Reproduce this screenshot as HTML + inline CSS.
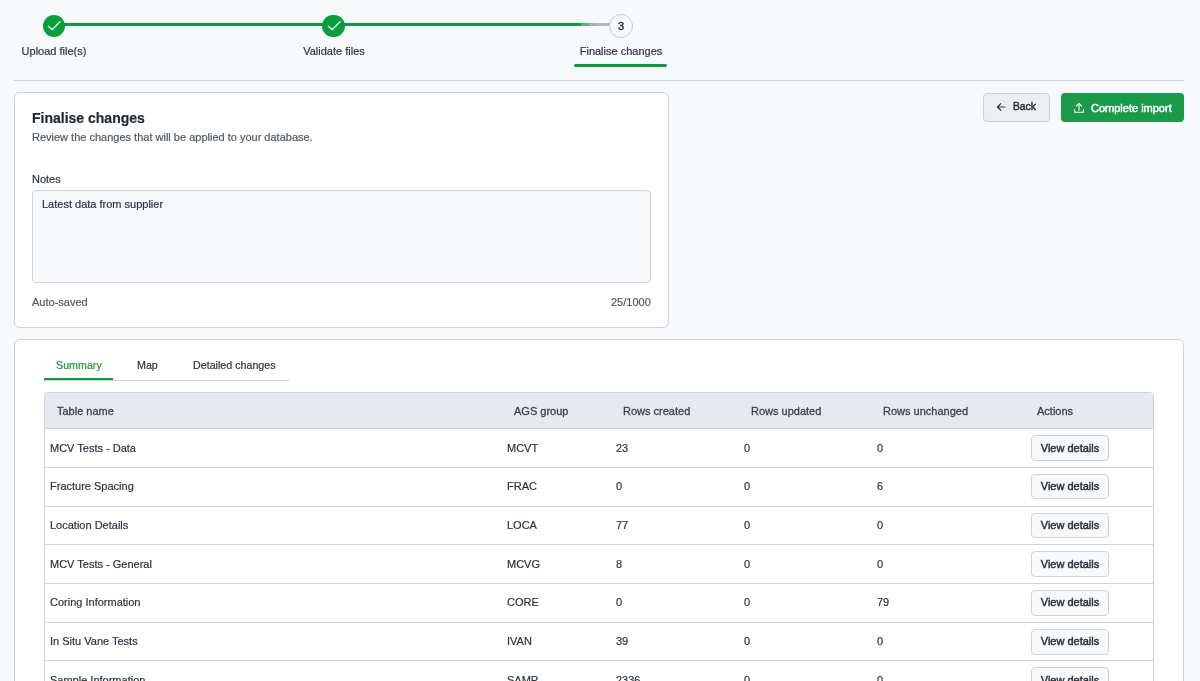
<!DOCTYPE html>
<html><head><meta charset="utf-8"><title>Finalise changes</title>
<style>
html,body{margin:0;padding:0;}
body{width:1200px;height:681px;overflow:hidden;position:relative;background:#f8f9fb;font-family:"Liberation Sans",sans-serif;}
.t{position:absolute;white-space:nowrap;-webkit-font-smoothing:antialiased;will-change:transform;-webkit-text-stroke:0.2px currentColor;}
.abs{position:absolute;box-sizing:border-box;}
</style></head><body>
<div class="abs" style="left:54px;top:22.9px;width:279px;height:3px;background:#06a03a;"></div>
<div class="abs" style="left:333px;top:22.9px;width:288px;height:3px;background:linear-gradient(to right,#06a03a 0,#06a03a 248px,#4cbf6e 248px,#4cbf6e 256px,#a4b3ac 256px,#a4b3ac 262px,#b3babf 262px,#b3babf 100%);"></div>
<div class="abs" style="left:42.75px;top:14.75px;width:22.5px;height:22.5px;border-radius:50%;background:#06a03a;"></div>
<svg class="abs" style="left:43.00px;top:15px;" width="22" height="22" viewBox="0 0 22 22"><path d="M5.4 11.3 L9.1 14.8 L17.1 6.6" fill="none" stroke="#fff" stroke-width="1.25" stroke-linecap="round" stroke-linejoin="round"/></svg>
<div class="abs" style="left:322.25px;top:14.75px;width:22.5px;height:22.5px;border-radius:50%;background:#06a03a;"></div>
<svg class="abs" style="left:322.50px;top:15px;" width="22" height="22" viewBox="0 0 22 22"><path d="M5.4 11.3 L9.1 14.8 L17.1 6.6" fill="none" stroke="#fff" stroke-width="1.25" stroke-linecap="round" stroke-linejoin="round"/></svg>
<div class="abs" style="left:609.2px;top:14px;width:24px;height:24px;border-radius:50%;background:#f8f9fb;border:1.2px solid #c5ccd6;"></div>
<div class="t" style="left:621.30px;width:200px;margin-left:-100px;text-align:center;top:18.89px;font-size:11px;line-height:14px;color:#2c3440;font-weight:normal;-webkit-text-stroke:0.45px currentColor;">3</div>
<div class="t" style="left:53.60px;width:200px;margin-left:-100px;text-align:center;top:43.89px;font-size:11px;line-height:14px;color:#2c3440;font-weight:normal;">Upload file(s)</div>
<div class="t" style="left:333.50px;width:200px;margin-left:-100px;text-align:center;top:43.89px;font-size:11px;line-height:14px;color:#2c3440;font-weight:normal;">Validate files</div>
<div class="t" style="left:621.00px;width:200px;margin-left:-100px;text-align:center;top:43.89px;font-size:11px;line-height:14px;color:#2c3440;font-weight:normal;">Finalise changes</div>
<div class="abs" style="left:574px;top:64px;width:93px;height:3px;border-radius:2px;background:#06a03a;"></div>
<div class="abs" style="left:14px;top:80px;width:1170px;height:1px;background:#cfd4dc;"></div>
<div class="abs" style="left:14px;top:92px;width:655px;height:236px;background:#fff;border:1px solid #cdd3dc;border-radius:6px;"></div>
<div class="t" style="left:31.70px;top:109.25px;font-size:14px;line-height:18px;color:#222a35;font-weight:bold;">Finalise changes</div>
<div class="t" style="left:32.00px;top:130.09px;font-size:11px;line-height:14px;color:#4f5865;font-weight:normal;">Review the changes that will be applied to your database.</div>
<div class="t" style="left:32.30px;top:171.89px;font-size:11px;line-height:14px;color:#2c3440;font-weight:normal;">Notes</div>
<div class="abs" style="left:32px;top:190px;width:618.5px;height:93px;background:#f8f9fb;border:1px solid #cdd3dc;border-radius:4px;"></div>
<div class="t" style="left:41.90px;top:196.89px;font-size:11px;line-height:14px;color:#2c3440;font-weight:normal;">Latest data from supplier</div>
<div class="t" style="left:32.30px;top:295.19px;font-size:11px;line-height:14px;color:#4f5865;font-weight:normal;">Auto-saved</div>
<div class="t" style="right:548.80px;top:294.99px;font-size:11px;line-height:14px;color:#4f5865;font-weight:normal;">25/1000</div>
<div class="abs" style="left:983px;top:92.5px;width:67px;height:29.5px;background:#eceef2;border:1px solid #cdd2da;border-radius:4px;"></div>
<svg class="abs" style="left:995px;top:101.3px;" width="12" height="12" viewBox="0 0 12 12"><path d="M9.9 6 H2.6 M5.8 2.7 L2.5 6 L5.8 9.3" fill="none" stroke="#2c3440" stroke-width="1.15" stroke-linecap="round" stroke-linejoin="round"/></svg>
<div class="t" style="left:1013.30px;top:100.33px;font-size:10.3px;line-height:14px;color:#2a323d;font-weight:normal;-webkit-text-stroke:0.45px currentColor;">Back</div>
<div class="abs" style="left:1061px;top:93px;width:123px;height:29px;background:#199b4a;border-radius:4px;"></div>
<svg class="abs" style="left:1072px;top:101px;" width="14" height="14" viewBox="0 0 14 14"><path d="M7 9 V2.6 M4.3 5.1 L7 2.4 L9.7 5.1 M2.6 8.6 V11.2 H11.4 V8.6" fill="none" stroke="#fff" stroke-width="1.1" stroke-linecap="round" stroke-linejoin="round"/></svg>
<div class="t" style="left:1090.50px;top:100.59px;font-size:11px;line-height:14px;color:#fff;font-weight:normal;-webkit-text-stroke:0.45px currentColor;">Complete import</div>
<div class="abs" style="left:14px;top:339px;width:1170px;height:400px;background:#fff;border:1px solid #cdd3dc;border-radius:6px;"></div>
<div class="abs" style="left:44px;top:380px;width:244.5px;height:1px;background:#cfd4dc;"></div>
<div class="abs" style="left:44px;top:378.4px;width:69px;height:1.8px;background:#06a03a;"></div>
<div class="t" style="left:55.50px;top:358.29px;font-size:10.7px;line-height:14px;color:#169a42;font-weight:normal;">Summary</div>
<div class="t" style="left:136.60px;top:358.29px;font-size:10.7px;line-height:14px;color:#2c3440;font-weight:normal;">Map</div>
<div class="t" style="left:193.00px;top:358.29px;font-size:10.7px;line-height:14px;color:#2c3440;font-weight:normal;">Detailed changes</div>
<div class="abs" style="left:44px;top:392px;width:1109.5px;height:400px;background:#fff;border:1px solid #cdd3dc;border-radius:4px 4px 0 0;"></div>
<div class="abs" style="left:45px;top:393px;width:1107.5px;height:35px;background:#e6e9ee;border-radius:3px 3px 0 0;"></div>
<div class="abs" style="left:45px;top:428px;width:1107.5px;height:1px;background:#cdd3dc;"></div>
<div class="t" style="left:56.90px;top:403.59px;font-size:11px;line-height:14px;color:#3a4350;font-weight:normal;-webkit-text-stroke:0.3px #3a4350;">Table name</div>
<div class="t" style="left:514.00px;top:403.59px;font-size:11px;line-height:14px;color:#3a4350;font-weight:normal;-webkit-text-stroke:0.3px #3a4350;">AGS group</div>
<div class="t" style="left:622.50px;top:403.59px;font-size:11px;line-height:14px;color:#3a4350;font-weight:normal;-webkit-text-stroke:0.3px #3a4350;">Rows created</div>
<div class="t" style="left:750.60px;top:403.59px;font-size:11px;line-height:14px;color:#3a4350;font-weight:normal;-webkit-text-stroke:0.3px #3a4350;">Rows updated</div>
<div class="t" style="left:883.40px;top:403.59px;font-size:11px;line-height:14px;color:#3a4350;font-weight:normal;-webkit-text-stroke:0.3px #3a4350;">Rows unchanged</div>
<div class="t" style="left:1036.75px;top:403.59px;font-size:11px;line-height:14px;color:#3a4350;font-weight:normal;-webkit-text-stroke:0.3px #3a4350;">Actions</div>
<div class="abs" style="left:45px;top:466.70px;width:1107.5px;height:1px;background:#cdd3dc;"></div>
<div class="t" style="left:50.00px;top:440.69px;font-size:11px;line-height:14px;color:#2c3440;font-weight:normal;">MCV Tests - Data</div>
<div class="t" style="left:507.40px;top:440.69px;font-size:11px;line-height:14px;color:#2c3440;font-weight:normal;">MCVT</div>
<div class="t" style="left:615.90px;top:440.69px;font-size:11px;line-height:14px;color:#2c3440;font-weight:normal;">23</div>
<div class="t" style="left:744.10px;top:440.69px;font-size:11px;line-height:14px;color:#2c3440;font-weight:normal;">0</div>
<div class="t" style="left:876.70px;top:440.69px;font-size:11px;line-height:14px;color:#2c3440;font-weight:normal;">0</div>
<div class="abs" style="left:1030.5px;top:435.25px;width:78.25px;height:25.5px;background:#f8f9fb;border:1px solid #cdd3dc;border-radius:4px;"></div>
<div class="t" style="left:1069.60px;width:200px;margin-left:-100px;text-align:center;top:440.69px;font-size:11px;line-height:14px;color:#2a323d;font-weight:normal;-webkit-text-stroke:0.45px currentColor;">View details</div>
<div class="abs" style="left:45px;top:505.50px;width:1107.5px;height:1px;background:#cdd3dc;"></div>
<div class="t" style="left:50.00px;top:479.39px;font-size:11px;line-height:14px;color:#2c3440;font-weight:normal;">Fracture Spacing</div>
<div class="t" style="left:507.40px;top:479.39px;font-size:11px;line-height:14px;color:#2c3440;font-weight:normal;">FRAC</div>
<div class="t" style="left:615.90px;top:479.39px;font-size:11px;line-height:14px;color:#2c3440;font-weight:normal;">0</div>
<div class="t" style="left:744.10px;top:479.39px;font-size:11px;line-height:14px;color:#2c3440;font-weight:normal;">0</div>
<div class="t" style="left:876.70px;top:479.39px;font-size:11px;line-height:14px;color:#2c3440;font-weight:normal;">6</div>
<div class="abs" style="left:1030.5px;top:473.95px;width:78.25px;height:25.5px;background:#f8f9fb;border:1px solid #cdd3dc;border-radius:4px;"></div>
<div class="t" style="left:1069.60px;width:200px;margin-left:-100px;text-align:center;top:479.39px;font-size:11px;line-height:14px;color:#2a323d;font-weight:normal;-webkit-text-stroke:0.45px currentColor;">View details</div>
<div class="abs" style="left:45px;top:544.20px;width:1107.5px;height:1px;background:#cdd3dc;"></div>
<div class="t" style="left:50.00px;top:518.19px;font-size:11px;line-height:14px;color:#2c3440;font-weight:normal;">Location Details</div>
<div class="t" style="left:507.40px;top:518.19px;font-size:11px;line-height:14px;color:#2c3440;font-weight:normal;">LOCA</div>
<div class="t" style="left:615.90px;top:518.19px;font-size:11px;line-height:14px;color:#2c3440;font-weight:normal;">77</div>
<div class="t" style="left:744.10px;top:518.19px;font-size:11px;line-height:14px;color:#2c3440;font-weight:normal;">0</div>
<div class="t" style="left:876.70px;top:518.19px;font-size:11px;line-height:14px;color:#2c3440;font-weight:normal;">0</div>
<div class="abs" style="left:1030.5px;top:512.75px;width:78.25px;height:25.5px;background:#f8f9fb;border:1px solid #cdd3dc;border-radius:4px;"></div>
<div class="t" style="left:1069.60px;width:200px;margin-left:-100px;text-align:center;top:518.19px;font-size:11px;line-height:14px;color:#2a323d;font-weight:normal;-webkit-text-stroke:0.45px currentColor;">View details</div>
<div class="abs" style="left:45px;top:582.80px;width:1107.5px;height:1px;background:#cdd3dc;"></div>
<div class="t" style="left:50.00px;top:556.89px;font-size:11px;line-height:14px;color:#2c3440;font-weight:normal;">MCV Tests - General</div>
<div class="t" style="left:507.40px;top:556.89px;font-size:11px;line-height:14px;color:#2c3440;font-weight:normal;">MCVG</div>
<div class="t" style="left:615.90px;top:556.89px;font-size:11px;line-height:14px;color:#2c3440;font-weight:normal;">8</div>
<div class="t" style="left:744.10px;top:556.89px;font-size:11px;line-height:14px;color:#2c3440;font-weight:normal;">0</div>
<div class="t" style="left:876.70px;top:556.89px;font-size:11px;line-height:14px;color:#2c3440;font-weight:normal;">0</div>
<div class="abs" style="left:1030.5px;top:551.45px;width:78.25px;height:25.5px;background:#f8f9fb;border:1px solid #cdd3dc;border-radius:4px;"></div>
<div class="t" style="left:1069.60px;width:200px;margin-left:-100px;text-align:center;top:556.89px;font-size:11px;line-height:14px;color:#2a323d;font-weight:normal;-webkit-text-stroke:0.45px currentColor;">View details</div>
<div class="abs" style="left:45px;top:621.80px;width:1107.5px;height:1px;background:#cdd3dc;"></div>
<div class="t" style="left:50.00px;top:595.49px;font-size:11px;line-height:14px;color:#2c3440;font-weight:normal;">Coring Information</div>
<div class="t" style="left:507.40px;top:595.49px;font-size:11px;line-height:14px;color:#2c3440;font-weight:normal;">CORE</div>
<div class="t" style="left:615.90px;top:595.49px;font-size:11px;line-height:14px;color:#2c3440;font-weight:normal;">0</div>
<div class="t" style="left:744.10px;top:595.49px;font-size:11px;line-height:14px;color:#2c3440;font-weight:normal;">0</div>
<div class="t" style="left:876.70px;top:595.49px;font-size:11px;line-height:14px;color:#2c3440;font-weight:normal;">79</div>
<div class="abs" style="left:1030.5px;top:590.05px;width:78.25px;height:25.5px;background:#f8f9fb;border:1px solid #cdd3dc;border-radius:4px;"></div>
<div class="t" style="left:1069.60px;width:200px;margin-left:-100px;text-align:center;top:595.49px;font-size:11px;line-height:14px;color:#2a323d;font-weight:normal;-webkit-text-stroke:0.45px currentColor;">View details</div>
<div class="abs" style="left:45px;top:660.10px;width:1107.5px;height:1px;background:#cdd3dc;"></div>
<div class="t" style="left:50.00px;top:634.49px;font-size:11px;line-height:14px;color:#2c3440;font-weight:normal;">In Situ Vane Tests</div>
<div class="t" style="left:507.40px;top:634.49px;font-size:11px;line-height:14px;color:#2c3440;font-weight:normal;">IVAN</div>
<div class="t" style="left:615.90px;top:634.49px;font-size:11px;line-height:14px;color:#2c3440;font-weight:normal;">39</div>
<div class="t" style="left:744.10px;top:634.49px;font-size:11px;line-height:14px;color:#2c3440;font-weight:normal;">0</div>
<div class="t" style="left:876.70px;top:634.49px;font-size:11px;line-height:14px;color:#2c3440;font-weight:normal;">0</div>
<div class="abs" style="left:1030.5px;top:629.05px;width:78.25px;height:25.5px;background:#f8f9fb;border:1px solid #cdd3dc;border-radius:4px;"></div>
<div class="t" style="left:1069.60px;width:200px;margin-left:-100px;text-align:center;top:634.49px;font-size:11px;line-height:14px;color:#2a323d;font-weight:normal;-webkit-text-stroke:0.45px currentColor;">View details</div>
<div class="abs" style="left:45px;top:698.80px;width:1107.5px;height:1px;background:#cdd3dc;"></div>
<div class="t" style="left:50.00px;top:672.79px;font-size:11px;line-height:14px;color:#2c3440;font-weight:normal;">Sample Information</div>
<div class="t" style="left:507.40px;top:672.79px;font-size:11px;line-height:14px;color:#2c3440;font-weight:normal;">SAMP</div>
<div class="t" style="left:615.90px;top:672.79px;font-size:11px;line-height:14px;color:#2c3440;font-weight:normal;">2336</div>
<div class="t" style="left:744.10px;top:672.79px;font-size:11px;line-height:14px;color:#2c3440;font-weight:normal;">0</div>
<div class="t" style="left:876.70px;top:672.79px;font-size:11px;line-height:14px;color:#2c3440;font-weight:normal;">0</div>
<div class="abs" style="left:1030.5px;top:667.35px;width:78.25px;height:25.5px;background:#f8f9fb;border:1px solid #cdd3dc;border-radius:4px;"></div>
<div class="t" style="left:1069.60px;width:200px;margin-left:-100px;text-align:center;top:672.79px;font-size:11px;line-height:14px;color:#2a323d;font-weight:normal;-webkit-text-stroke:0.45px currentColor;">View details</div>
</body></html>
